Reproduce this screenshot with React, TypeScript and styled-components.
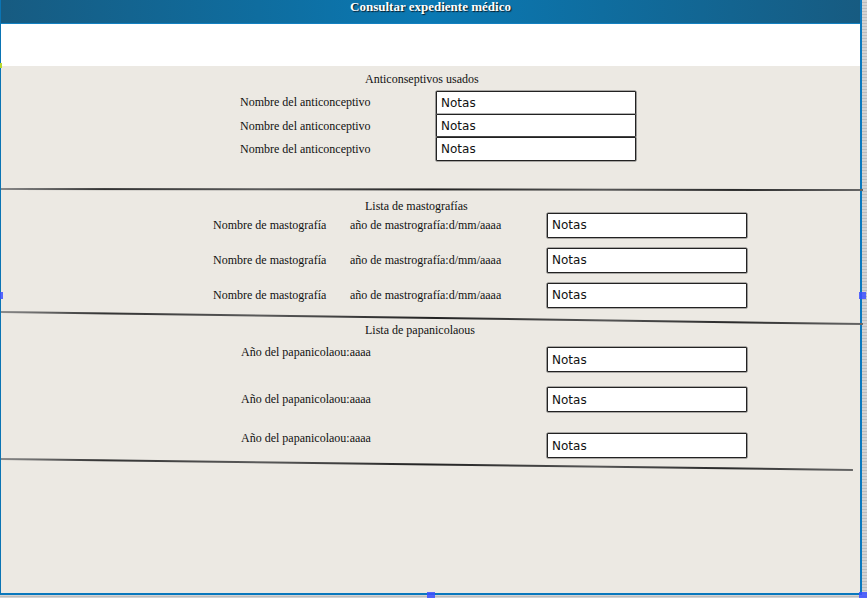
import React from "react";
import styled, { createGlobalStyle } from "styled-components";

const GlobalStyle = createGlobalStyle`
  html, body {
    margin: 0;
    padding: 0;
  }
  body {
    width: 867px;
    height: 598px;
    overflow: hidden;
    background-color: #c9c9c9;
    background-image: repeating-linear-gradient(
      to bottom,
      #d4d4d4 0px,
      #d4d4d4 2px,
      #bdbdbd 2px,
      #bdbdbd 3px
    );
    font-family: "Liberation Serif", "Times New Roman", serif;
  }
`;

const Frame = styled.div`
  position: relative;
  width: 862px;
  height: 595px;
  box-sizing: border-box;
  border-left: 1px solid #0a74b4;
  border-right: 2px solid #0a78bd;
  border-bottom: 2px solid #0a78bd;
  display: flex;
  flex-direction: column;
  background: #ece9e3;
`;

const Header = styled.header`
  height: 24px;
  box-sizing: border-box;
  border-bottom: 1px solid #1380c0;
  background: linear-gradient(to right, #175b81 0%, #0f6d9f 30%, #0a79b4 50%, #0f6d9f 70%, #175b81 100%);
  color: #fff;
  font-weight: bold;
  font-size: 13px;
  line-height: 14px;
  text-align: center;
  text-shadow: 1px 1px 1px #0a1d2a;
`;

const WhiteBand = styled.div`
  height: 42px;
  background: #fff;
`;

const Content = styled.main`
  flex: 1;
  display: flex;
  flex-direction: column;
`;

const Section = styled.section<{ $height: number; $pad: number }>`
  height: ${(p) => p.$height}px;
  padding-top: ${(p) => p.$pad}px;
  box-sizing: border-box;
  display: flex;
  flex-direction: column;
`;

const Title = styled.div`
  padding-left: 364px;
  font-size: 12px;
  line-height: 14px;
  color: #111;
`;

const Rows = styled.div<{ $top: number; $gap: number }>`
  margin-top: ${(p) => p.$top}px;
  display: flex;
  flex-direction: column;
  gap: ${(p) => p.$gap}px;
`;

const Row = styled.div<{ $left: number; $cols: string; $align?: string; $mt?: number; $h: number }>`
  display: grid;
  grid-template-columns: ${(p) => p.$cols};
  padding-left: ${(p) => p.$left}px;
  height: ${(p) => p.$h}px;
  align-items: ${(p) => p.$align || "center"};
  margin-top: ${(p) => p.$mt || 0}px;
`;

const Label = styled.span<{ $offset?: number }>`
  font-size: 12px;
  line-height: 14px;
  color: #111;
  white-space: nowrap;
  margin-top: ${(p) => p.$offset || 0}px;
`;

const BoxSlot = styled.div`
  padding-top: 2px;
`;

const NoteBox = styled.div<{ $h: number }>`
  width: 200px;
  height: ${(p) => p.$h}px;
  box-sizing: border-box;
  background: #fff;
  border: 1px solid #222;
  box-shadow: 0 0 0 0.6px #666;
  border-radius: 1px;
  display: flex;
  align-items: center;
  padding-left: 4px;
  font-family: "Comic Sans MS", "DejaVu Sans", sans-serif;
  font-size: 12px;
  color: #111;
`;

const Divider = styled.div<{ $width: number; $angle: number }>`
  width: ${(p) => p.$width}px;
  height: 1.5px;
  flex-shrink: 0;
  transform-origin: left center;
  transform: rotate(${(p) => p.$angle}deg);
  background: linear-gradient(
    to right,
    #8a8a8a 0%,
    #333 12%,
    #5a5a5a 30%,
    #222 50%,
    #555 70%,
    #2a2a2a 85%,
    #666 100%
  );
`;

const Handle = styled.span<{ $x: number; $y: number; $w: number; $h: number }>`
  position: absolute;
  left: ${(p) => p.$x}px;
  top: ${(p) => p.$y}px;
  width: ${(p) => p.$w}px;
  height: ${(p) => p.$h}px;
  background: rgba(60, 80, 255, 0.85);
`;

const Mark = styled.span`
  position: absolute;
  left: -1px;
  top: 63px;
  width: 2px;
  height: 5px;
  background: #b8d830;
`;

export default function App() {
  return (
    <>
      <GlobalStyle />
      <Frame>
        <Header>Consultar expediente médico</Header>
        <WhiteBand />
        <Content>
          <Section $height={122} $pad={6}>
            <Title>Anticonseptivos usados</Title>
            <Rows $top={5} $gap={0}>
              {[0, 1, 2].map((i) => (
                <Row key={i} $left={239} $cols="196px 200px" $h={23}>
                  <Label $offset={i === 0 ? -2 : 0}>Nombre del anticonceptivo</Label>
                  <NoteBox $h={i === 1 ? 23 : 24}>Notas</NoteBox>
                </Row>
              ))}
            </Rows>
          </Section>
          <Divider $width={862} $angle={0.07} />
          <Section $height={121} $pad={9}>
            <Title>Lista de mastografías</Title>
            <Rows $top={0} $gap={10}>
              {[0, 1, 2].map((i) => (
                <Row key={i} $left={212} $cols="137px 197px 200px" $h={25}>
                  <Label>Nombre de mastografía</Label>
                  <Label>año de mastrografía:d/mm/aaaa</Label>
                  <NoteBox $h={25}>Notas</NoteBox>
                </Row>
              ))}
            </Rows>
          </Section>
          <Divider $width={862} $angle={0.8} />
          <Section $height={146} $pad={11}>
            <Title>Lista de papanicolaous</Title>
            <Rows $top={8} $gap={0}>
              {[
                { mt: 0, off: 0 },
                { mt: 13, off: 7 },
                { mt: 19, off: 0 },
              ].map((r, i) => (
                <Row key={i} $left={240} $cols="306px 200px" $h={27} $align="start" $mt={r.mt}>
                  <Label $offset={r.off}>Año del papanicolaou:aaaa</Label>
                  <BoxSlot>
                    <NoteBox $h={25}>Notas</NoteBox>
                  </BoxSlot>
                </Row>
              ))}
            </Rows>
          </Section>
          <Divider $width={852} $angle={0.74} />
        </Content>
        <Mark />
        <Handle $x={-1} $y={292} $w={3} $h={7} />
        <Handle $x={858} $y={292} $w={7} $h={7} />
        <Handle $x={426} $y={592} $w={8} $h={6} />
        <Handle $x={858} $y={592} $w={8} $h={6} />
      </Frame>
    </>
  );
}
